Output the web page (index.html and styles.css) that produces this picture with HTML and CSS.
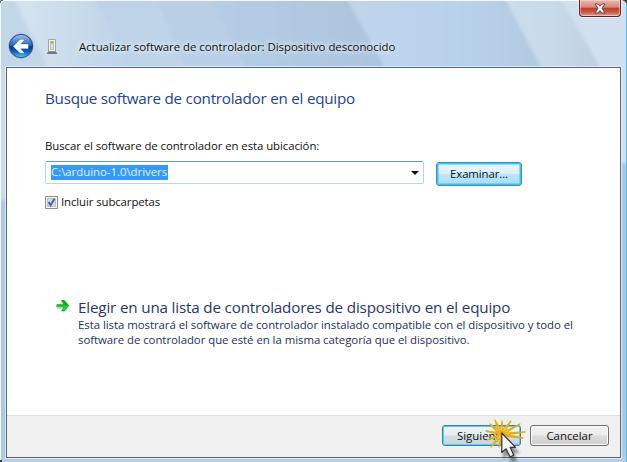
FILE: index.html
```html
<!DOCTYPE html>
<html lang="es">
<head>
<meta charset="utf-8">
<title>Actualizar software de controlador</title>
<link rel="stylesheet" href="styles.css">
</head>
<body>
<div class="window">
  <svg class="glass" width="627" height="462" viewBox="0 0 627 462" aria-hidden="true">
    <defs>
      <linearGradient id="g0" x1="0" x2="1"><stop offset="0" stop-color="#c9dbeb"/><stop offset=".25" stop-color="#c5d9ec"/><stop offset=".7" stop-color="#bfd5eb"/><stop offset="1" stop-color="#d2e1ef"/></linearGradient>
      <linearGradient id="g1" x1="0" x2="1"><stop offset="0" stop-color="#d6e4f0"/><stop offset="1" stop-color="#bdd2e6"/></linearGradient>
      <linearGradient id="g2" x1="0" x2="1"><stop offset="0" stop-color="#b5cde6"/><stop offset="1" stop-color="#abc4dc"/></linearGradient>
      <linearGradient id="g3" x1="0" x2="1"><stop offset="0" stop-color="#bfd5ec"/><stop offset=".6" stop-color="#b8d1eb"/><stop offset="1" stop-color="#b2cadf"/></linearGradient>
      <linearGradient id="g4" x1="0" x2="1"><stop offset="0" stop-color="#cbdced"/><stop offset=".5" stop-color="#c8daea"/><stop offset="1" stop-color="#becfdf"/></linearGradient>
      <filter id="soft"><feGaussianBlur stdDeviation="1.5"/></filter>
    </defs>
    <path fill="url(#g0)" d="M0 0H627V462H0z"/>
    <g filter="url(#soft)">
      <path fill="#c3d6e7" d="M-5-5H10L48 70H-5z"/>
      <path fill="url(#g1)" d="M14-5H90L134 70H50z"/>
      <path fill="#bed3e8" d="M92-5H155L186 70H132z"/>
      <path fill="#b8cfe6" d="M155-5H210L247 70H186z"/>
      <path fill="url(#g2)" d="M208-5H345L386 70H247z"/>
      <path fill="url(#g3)" d="M345-5H503L543 70H386z"/>
      <path fill="url(#g4)" d="M503-5H558L602 70H543z"/>
      <path fill="#d1e0ef" d="M560-5H632V163H619V70H602z"/>
      <path fill="#aec8e2" d="M619 163H632V470H619zM-3 200H8V470H-3z"/>
      <path fill="#b5cde5" d="M-3 456H630V470H-3z"/>
    </g>
    <path fill="none" stroke="#f6fbff" d="M.5 462V6Q.5.5 6 .5H621"/>
    <path fill="none" stroke="#4b5960" d="M0 3Q0 0 3 0"/>
    <path fill="#37cdee" d="M626 4h1v458h-1z"/>
    <path fill="#394247" d="M622 0h5v5Q626 1 622 0zM0 460h2v2H0z"/>
  </svg>
  <header class="titlebar">
    <svg class="back" width="26" height="26" viewBox="0 0 26 26" aria-label="Atrás">
      <defs>
        <linearGradient id="b1" x1="0" y1="0" x2="0" y2="1"><stop offset="0" stop-color="#a9c5e8"/><stop offset=".25" stop-color="#5d8fd2"/><stop offset=".49" stop-color="#2662ba"/><stop offset=".5" stop-color="#073598"/><stop offset=".75" stop-color="#1161bd"/><stop offset="1" stop-color="#4fd5fa"/></linearGradient>
      </defs>
      <circle cx="13" cy="13" r="12.5" fill="#7894b4" opacity=".7"/>
      <circle cx="13" cy="13" r="11.6" fill="url(#b1)" stroke="#1d4380" stroke-width=".9"/>
      <path d="M5.500 13.500 12.300 7H15.800L11.900 11.500H20V15.300H11.900L15.800 19.800H12.300z" fill="#fff" stroke="#fff" stroke-width=".6" stroke-linejoin="round"/>
    </svg>
    <svg class="device" width="12" height="17" viewBox="0 0 12 17" aria-hidden="true">
      <path fill="#f2f2ed" stroke="#a0a3a0" d="M2.500 1.500h7v12h-7z"/>
      <path fill="#dfe2dc" stroke="#a5aaa3" stroke-width=".7" d="M4.500 3.500h3v8h-3z"/>
      <path fill="#61c73e" d="M5 3.500h2v2H5z"/>
      <path fill="#777a77" d="M2 13.500h8v1h1V16H1v-1.500h1z"/>
    </svg>
    <h1 class="title">Actualizar software de controlador: Dispositivo desconocido</h1>
    <button class="close" aria-label="Cerrar">
      <svg width="12" height="11" viewBox="0 0 12 11"><path fill="#f7f7f7" stroke="#5b4d58" d="M1 1H4.300L6 3.200 7.700 1H11L8 5.400 11 10H7.700L6 7.600 4.300 10H1L4 5.400z"/></svg>
    </button>
  </header>
  <div class="client">
    <main class="page">
      <h2 class="heading">Busque software de controlador en el equipo</h2>
      <label class="caption">Buscar el software de controlador en esta ubicación:</label>
      <div class="row">
        <div class="combo"><span class="selected">C:\arduino-1.0\drivers</span><i class="caret"></i></div>
        <button class="btn browse"><span>Examinar...</span></button>
      </div>
      <div class="check">
        <svg width="13" height="13" viewBox="0 0 13 13" aria-hidden="true"><path fill="#f4f4f4" stroke="#8e8f8f" d="M.5.500h12v12H.5z"/><path fill="#d5dae0" stroke="#b2b8c0" stroke-width=".8" d="M2.500 2.500h8v8h-8z"/><path fill="none" stroke="#435f9f" stroke-width="1.800" d="M3.600 6 5.500 9.200 9.500 2.800"/></svg>
        <span>Incluir subcarpetas</span>
      </div>
      <section class="choice">
        <svg class="arrow" width="15" height="15" viewBox="0 0 15 15" aria-hidden="true">
          <path fill="#ccd2cc" opacity=".7" d="M1 7h7L5 3h4l5 5-5 5.500H6L8.500 10H1z"/>
          <path fill="#10a81c" d="M.5 5.300H7.500L5 1H8.200L13.200 6.600 8.200 12.200H5L7.500 8.300H.5z"/>
          <path fill="#20d235" d="M1 6.600H12.500L8 11.700H5.900L8.300 7.900H1z"/>
        </svg>
        <div>
          <h3 class="choice-title">Elegir en una lista de controladores de dispositivo en el equipo</h3>
          <p class="line one">Esta lista mostrará el software de controlador instalado compatible con el dispositivo y todo el</p>
          <p class="line two">software de controlador que esté en la misma categoría que el dispositivo.</p>
        </div>
      </section>
    </main>
    <footer class="footer">
      <button class="btn next"><span>Siguiente</span></button>
      <button class="btn cancel"><span>Cancelar</span></button>
    </footer>
  </div>
  <svg class="pointer" width="50" height="47" viewBox="0 0 50 47" aria-hidden="true">
    <defs><filter id="shade" x="-50%" y="-50%" width="200%" height="200%"><feGaussianBlur stdDeviation="1.800"/></filter></defs>
    <path fill="#000" opacity=".4" filter="url(#shade)" d="M20 20V42L25 38 29 46 34 44 31 36H37z"/>
    <g fill="#fbd95a" fill-opacity=".7" stroke="#e6ad13" stroke-width="1.300" stroke-linejoin="round">
      <path d="M18 15 7 7 16 17z"/>
      <path d="M19 15 12 3 16 16z"/>
      <path d="M20 15 19 4 17 15z"/>
      <path d="M21 16 28 4 18 15z"/>
      <path d="M21 17 37 7 20 15z"/>
      <path d="M21 18 42 15 21 16z"/>
      <path d="M20 19 40 21 21 17z"/>
      <path d="M18 18 3 14 18 16z"/>
      <path d="M18 19 4 23 18 17z"/>
      <path d="M19 19 8 30 17 17z"/>
      <path d="M20 19 16 30 18 18z"/>
    </g>
    <path fill="#f4f4f4" stroke="#343434" stroke-width="1.200" stroke-linejoin="round" d="M18.800 16V35.500L23.100 31.800 27 39.800 30.700 38.200 27.200 30.300H32.500z"/>
  </svg>
</div>
</body>
</html>
```

FILE: styles.css
```css
* { box-sizing: border-box; }
html, body { margin: 0; }
body {
  width: 627px;
  height: 462px;
  overflow: hidden;
  font: 11.4px/16px "Open Sans", "Noto Sans", sans-serif;
  color: #111;
}
h1, h2, h3, p { margin: 0; font-weight: 400; white-space: nowrap; }
button { font: inherit; color: inherit; padding: 0; margin: 0; }
.window { position: relative; width: 627px; height: 462px; padding: 0 6px 6px; isolation: isolate; }
.glass { position: absolute; inset: 0; z-index: -1; }
.titlebar { position: relative; display: flex; height: 67px; padding: 33px 0 0 2px; }
.device { margin: 5px 0 0 12px; }
.title {
  margin: 6px 0 0 21px;
  font-size: 11.4px;
  line-height: 16px;
  letter-spacing: -.02px;
  text-shadow: 0 0 5px #f0f7ff, 0 0 8px #eef5fd;
}
.close {
  position: absolute;
  right: 0;
  top: 0;
  width: 42px;
  height: 17px;
  display: flex;
  align-items: center;
  justify-content: center;
  border: 1px solid #5c2422;
  border-top: 0;
  border-radius: 0 0 4px 4px;
  background: linear-gradient(#e8b6ad 0, #d9897d 45%, #bd3c27 50%, #cb5640 75%, #e5a18f 100%);
  box-shadow: inset 0 0 0 1px rgba(255, 220, 210, .55), 0 0 1px 1px rgba(240, 248, 255, .6);
}
.client {
  width: 615px;
  height: 391px;
  border: 1px solid #596773;
  background: #fff;
  box-shadow: 0 0 0 1px rgba(231, 241, 250, .8);
  display: flex;
  flex-direction: column;
}
.page { flex: 1; padding: 19px 0 0 38px; }
.heading { font-size: 15.2px; line-height: 22px; letter-spacing: -.23px; color: #1b429f; }
.caption { display: block; margin-top: 29px; letter-spacing: -.07px; white-space: nowrap; }
.row { display: flex; gap: 12px; margin-top: 7px; }
.combo {
  width: 379px;
  height: 23px;
  padding: 3px 4px 0 5px;
  display: flex;
  justify-content: space-between;
  border: 1px solid #b9d5e9;
  border-top-color: #6a96bd;
  border-radius: 2px;
}
.selected { height: 15px; line-height: 14px; padding: 0 1px 0 0; letter-spacing: -.02px; background: #3399ff; color: #e5f3ff; white-space: nowrap; }
.caret { width: 0; height: 0; margin-top: 6px; border: 4px solid transparent; border-top-color: #111; border-bottom: 0; }
.btn {
  display: flex;
  align-items: center;
  justify-content: center;
  border: 1px solid #707070;
  border-radius: 3px;
  background: linear-gradient(#f3f3f3 0, #ebebeb 48%, #dcdcdc 52%, #cfcfcf 100%);
  box-shadow: inset 0 0 0 1px #fafafa;
  white-space: nowrap;
}
.browse {
  width: 86px;
  height: 24px;
  margin-top: 1px;
  letter-spacing: -.1px;
  border-color: #3c8fb9;
  background: linear-gradient(#eaf6fd 0, #d9f0fc 48%, #bee6fd 52%, #a9daf5 100%);
  box-shadow: inset 0 0 0 1.500px #35c7f4;
}
.check { display: flex; gap: 3px; margin-top: 8px; height: 16px; letter-spacing: -.1px; }
.check svg { margin-top: 2px; }
.choice { display: flex; gap: 7px; margin: 86px 0 0 11px; color: #1d3065; }
.arrow { margin-top: 3px; }
.choice-title { font-size: 15.2px; line-height: 22px; letter-spacing: -.16px; color: #25376b; }
.line { line-height: 15px; letter-spacing: -.04px; }
.one { margin-top: -1px; }
.footer {
  height: 42px;
  display: flex;
  gap: 9px;
  justify-content: flex-end;
  padding: 9px 11px 0 0;
  border-top: 1px solid #dfdfdf;
  background: #f0f0f0;
}
.footer .btn { width: 79px; height: 21px; }
.footer .next {
  border-color: #3c7fb1;
  background: linear-gradient(#f0f4f6 0, #e5eef3 48%, #cfdfe7 52%, #c3d5de 100%);
  box-shadow: inset 0 0 0 1px #5acdf0;
}
.pointer { position: absolute; left: 483px; top: 417px; }
```
